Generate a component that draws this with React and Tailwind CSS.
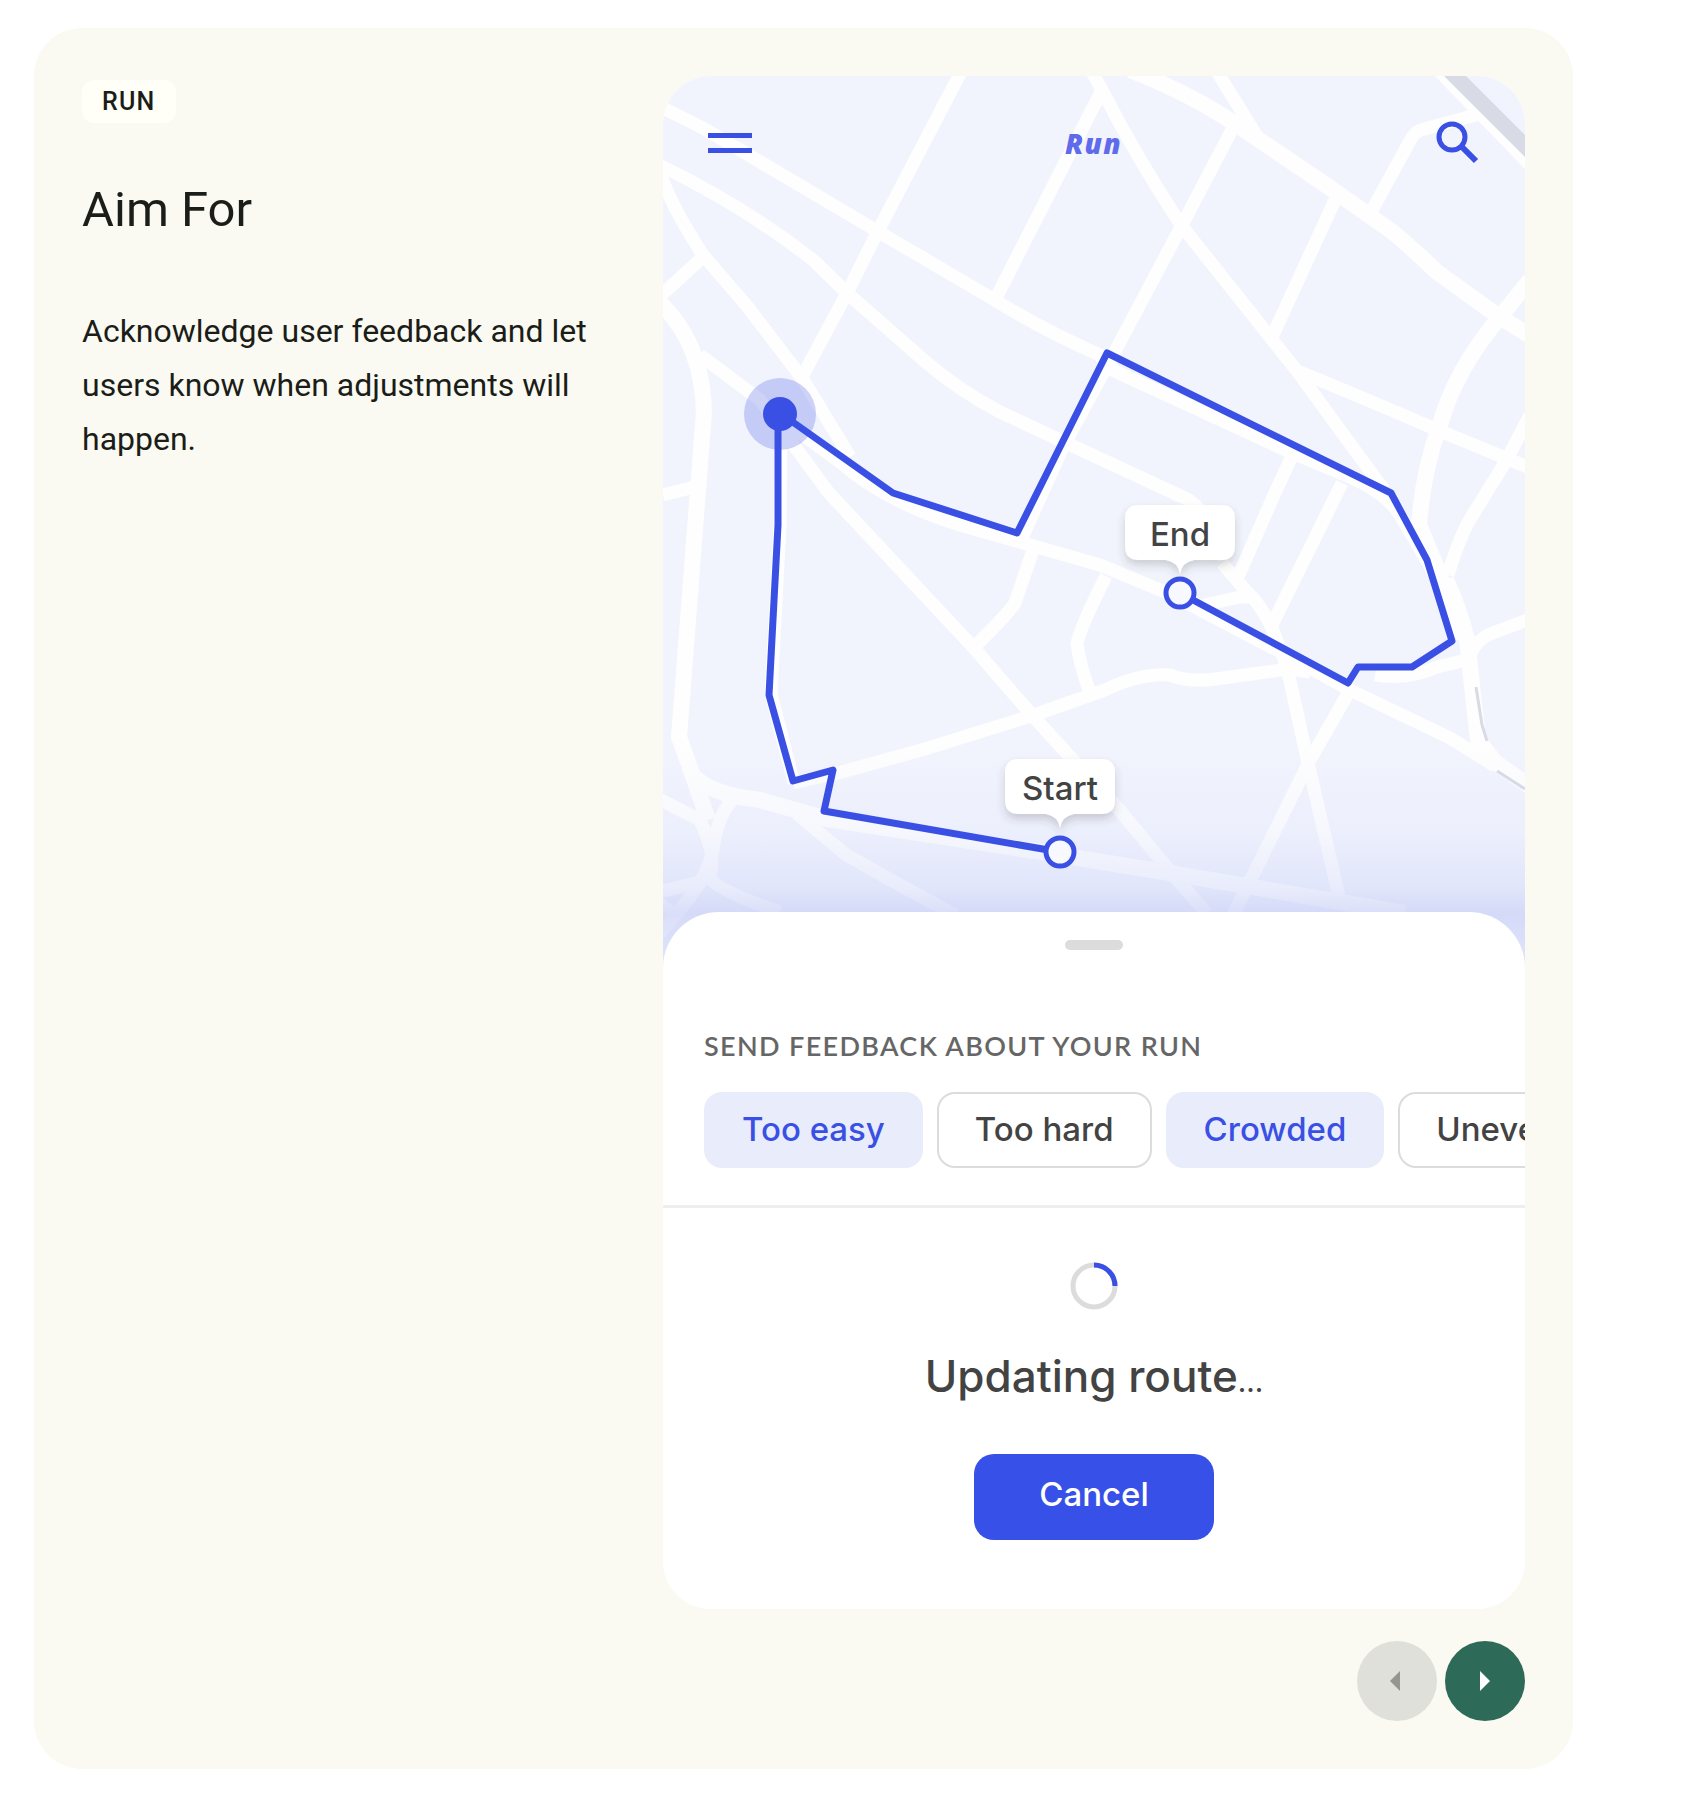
import clsx from "clsx";

const chips = [
  { label: "Too easy", selected: true },
  { label: "Too hard", selected: false },
  { label: "Crowded", selected: true },
  { label: "Uneven", selected: false },
];

const roads = [
  "M655 104L703 128L877 231L993 299Q1043 330 1100 355L1108 368L1290 452L1350 477Q1385 492 1400 515L1430 566L1450 605",
  "M655 163Q743 205 813 260L847 293L927 363Q960 391 1000 412L1062 441L1187 499Q1212 515 1224 560",
  "M962 70L877 233L847 293L802 377",
  "M658 165Q666 198 703 255L747 306L802 378L850 457",
  "M658 298L703 257",
  "M663 495L698 486",
  "M700 355L760 400L790 440L829 493L973 647L1031 714L1073 760L1117 807L1170 871L1207 914",
  "M780 418L840 462Q885 502 960 525L1100 565L1170 594L1290 657L1350 690L1450 738L1495 766",
  "M1236 122L1181 227L1112 357L1063 447L1022 538",
  "M1103 88L996 298",
  "M1092 72L1102 90Q1135 155 1181 225L1270 337L1297 371L1384 490",
  "M1216 70L1258 138",
  "M1335 200L1272 337",
  "M1370 214L1411 139Q1415 131 1424 129L1476 115",
  "M1297 371Q1340 388 1440 431L1530 468",
  "M1530 415L1506 461L1472 516Q1460 535 1448 575",
  "M1530 619L1490 634Q1472 643 1468 662",
  "M1462 661L1437 667Q1410 680 1375 675",
  "M1292 456L1274 495L1238 577",
  "M1342 483L1272 625",
  "M1200 606L1240 597L1253 597",
  "M1222 563L1247 592Q1259 602 1272 628L1287 667L1308 763L1341 905",
  "M793 783L838 773L925 749L1031 716L1105 690Q1140 673 1170 675Q1190 684 1230 677L1288 669L1310 672",
  "M1034 547L1015 603Q1010 612 972 649",
  "M1106 576Q1079 630 1077 644Q1080 665 1090 693",
  "M1350 690L1310 760L1247 887L1233 915",
  "M797 814L845 854Q890 880 955 915",
  "M655 797L700 820Q718 860 709 877Q716 890 780 912",
  "M738 795Q718 810 713 850Q707 884 655 938",
  "M655 893L704 881",
  "M655 900L676 917",
  "M781 415L780 525L771 694L794 783",
];

const wideRoads = [
  "M1130 70Q1190 93 1240 127L1323 183L1390 230Q1410 246 1437 272L1498 316L1532 337",
  "M1530 280L1500 317Q1455 370 1440 425Q1423 470 1419 525L1440 575L1458 640",
  "M655 298Q688 328 698 368Q706 400 703 425L688 620L679 737L693 776L708 820",
  "M693 776Q712 795 760 800L827 819L1047 853L1170 873L1405 913",
  "M1446 580Q1460 610 1467 640L1478 740L1495 762L1532 788",
];

function RouteMap() {
  return (
    <svg viewBox="663 76 862 892" className="block w-full" role="img" aria-label="Run route map">
      <defs>
        <linearGradient id="mapFade" x1="0" y1="0" x2="0" y2="1">
          <stop offset="0" stopColor="#c0caf6" stopOpacity="0" />
          <stop offset="0.4" stopColor="#c0caf6" stopOpacity="0.12" />
          <stop offset="0.65" stopColor="#c0caf6" stopOpacity="0.35" />
          <stop offset="0.76" stopColor="#bcc4f4" stopOpacity="0.55" />
          <stop offset="1" stopColor="#bcc4f4" stopOpacity="0.3" />
        </linearGradient>
        <filter id="pinShadow" x="-10%" y="-10%" width="120%" height="140%">
          <feDropShadow dx="0" dy="5" stdDeviation="4" floodColor="#3c4043" floodOpacity="0.22" />
        </filter>
      </defs>

      <rect x="663" y="76" width="862" height="892" fill="#f2f4fd" />

      <g fill="none" stroke="#fefefe" strokeWidth="13" strokeLinejoin="round">
        {roads.map((d) => (
          <path key={d} d={d} />
        ))}
      </g>
      <g fill="none" stroke="#fefefe" strokeWidth="16" strokeLinejoin="round">
        {wideRoads.map((d) => (
          <path key={d} d={d} />
        ))}
      </g>

      {/* railway */}
      <path d="M1436 70L1530 167" stroke="#fefefe" strokeWidth="10" />
      <path d="M1444 76H1466L1525 135V157Z" fill="#d8dbe6" />
      <path d="M1476 687L1482 725L1487 741M1497 771L1525 789" fill="none" stroke="#d8dbe6" strokeWidth="3" />

      <rect x="663" y="740" width="862" height="228" fill="url(#mapFade)" />

      {/* current position */}
      <circle cx="780" cy="414" r="36" fill="#3a50e4" fillOpacity="0.25" />
      <g fill="none" stroke="#3a50e4" strokeWidth="7" strokeLinejoin="round">
        <path d="M778 413L778 525L769 695L793 781L833 770L824 811L1060 852" />
        <path d="M780 413L893 493L1017 533L1107 353L1391 493L1427 560L1452 641L1412 667L1358 667L1348 683L1180 593" />
      </g>
      <circle cx="780" cy="414" r="17" fill="#3a50e4" />
      <g fill="#f7f9fe" stroke="#3a50e4" strokeWidth="5">
        <circle cx="1060" cy="852" r="14" />
        <circle cx="1180" cy="593" r="14" />
      </g>

      <MapPin x={1180} y={505} label="End" />
      <MapPin x={1060} y={759} label="Start" />
    </svg>
  );
}

function MapPin({ x, y, label }) {
  return (
    <g transform={`translate(${x} ${y})`}>
      <path
        d="M-41 0H41Q55 0 55 14V41Q55 55 41 55H14Q2 57 0 69Q-2 57 -14 55H-41Q-55 55 -55 41V14Q-55 0 -41 0Z"
        fill="#fff"
        filter="url(#pinShadow)"
      />
      <text y="41" textAnchor="middle" className="fill-[#434343] font-['Inter',sans-serif] text-[33px] font-medium">
        {label}
      </text>
    </g>
  );
}

function Chip({ label, selected }) {
  return (
    <button
      type="button"
      aria-pressed={selected}
      className={clsx(
        "h-[76px] shrink-0 rounded-[18px] border-2 px-9 font-['Inter',sans-serif] text-[33px] font-medium",
        selected ? "border-[#e9ecfa] bg-[#e9ecfa] text-[#3a50e4]" : "border-[#dcdcdc] bg-white text-[#434343]"
      )}
    >
      {label}
    </button>
  );
}

function Phone() {
  return (
    <div className="relative overflow-hidden rounded-[48px] bg-white font-['Lato',sans-serif]">
      <RouteMap />

      <header className="absolute inset-x-0 top-0 flex items-center justify-between pt-[45px] pr-[46px] pl-[45px]">
        <button type="button" aria-label="Menu">
          <svg width="44" height="20" viewBox="0 0 44 20" fill="#3a50e4">
            <rect width="44" height="5" />
            <rect y="15" width="44" height="5" />
          </svg>
        </button>
        <span className="font-['Open_Sans',sans-serif] text-[28px] leading-8 font-extrabold tracking-wider text-[#5f6bea] italic">Run</span>
        <button type="button" aria-label="Search">
          <svg width="44" height="44" viewBox="0 0 44 44" fill="none" stroke="#3a50e4" strokeWidth="5">
            <circle cx="17" cy="16" r="13" />
            <path d="M26 25L41 40" strokeWidth="6" />
          </svg>
        </button>
      </header>

      <section className="relative -mt-14 flex flex-col rounded-t-[56px] bg-white pt-7 pb-[69px]">
        <div className="h-[10px] w-[58px] self-center rounded-full bg-[#dcdcdc]" />

        <h3 className="mt-20 px-[41px] text-[27px] leading-8 font-semibold tracking-wider text-[#666] uppercase">
          Send feedback about your run
        </h3>
        <div className="mt-[30px] flex gap-3.5 overflow-x-auto pl-[41px] [scrollbar-width:none]">
          {chips.map((chip) => (
            <Chip key={chip.label} {...chip} />
          ))}
        </div>

        <hr className="mt-[37px] border-t-3 border-[#eee]" />

        <div className="mt-[54px] flex flex-col items-center font-['Inter',sans-serif] font-medium">
          <svg width="48" height="48" viewBox="0 0 48 48" fill="none" strokeWidth="5">
            <circle cx="24" cy="24" r="21" stroke="#dcdcdc" />
            <path d="M24 3A21 21 0 0 1 45 24" stroke="#3a50e4" />
          </svg>
          <p className="mt-[42px] text-[44px] leading-12 text-[#434343]" role="status">
            Updating route<span className="text-[28px]">…</span>
          </p>
          <button type="button" className="mt-12 h-[86px] w-[240px] rounded-[20px] bg-[#3650e8] pb-1 text-[33px] text-white">
            Cancel
          </button>
        </div>
      </section>
    </div>
  );
}

export default function App() {
  return (
    <main className="bg-white pt-7 pr-[115px] pb-[39px] pl-[34px]">
      <article className="rounded-[48px] bg-[#fafaf2] p-12 text-[#1b1d18]">
        <div className="grid grid-cols-[533fr_862fr] gap-12">
          <div className="flex flex-col items-start font-['Roboto',sans-serif]">
            <span className="mt-1 rounded-xl bg-[#fffff8] px-5 text-[25px] leading-[43px] font-medium tracking-wider">RUN</span>
            <h2 className="mt-[57px] text-[49px] leading-[60px]">Aim For</h2>
            <p className="mt-16 text-[32px] leading-[54px]">
              Acknowledge user feedback and let users know when adjustments will happen.
            </p>
          </div>
          <Phone />
        </div>

        <nav className="mt-8 flex justify-end gap-2" aria-label="Examples">
          <button type="button" disabled aria-label="Previous" className="flex size-20 items-center justify-center rounded-full bg-[#dfe0da]">
            <svg width="14" height="20" viewBox="0 0 14 20" fill="#95968f">
              <path d="M10 0V20L0 10Z" />
            </svg>
          </button>
          <button type="button" aria-label="Next" className="flex size-20 items-center justify-center rounded-full bg-[#2d6a57]">
            <svg width="10" height="20" viewBox="0 0 10 20" fill="#fff">
              <path d="M0 0V20L10 10Z" />
            </svg>
          </button>
        </nav>
      </article>
    </main>
  );
}
